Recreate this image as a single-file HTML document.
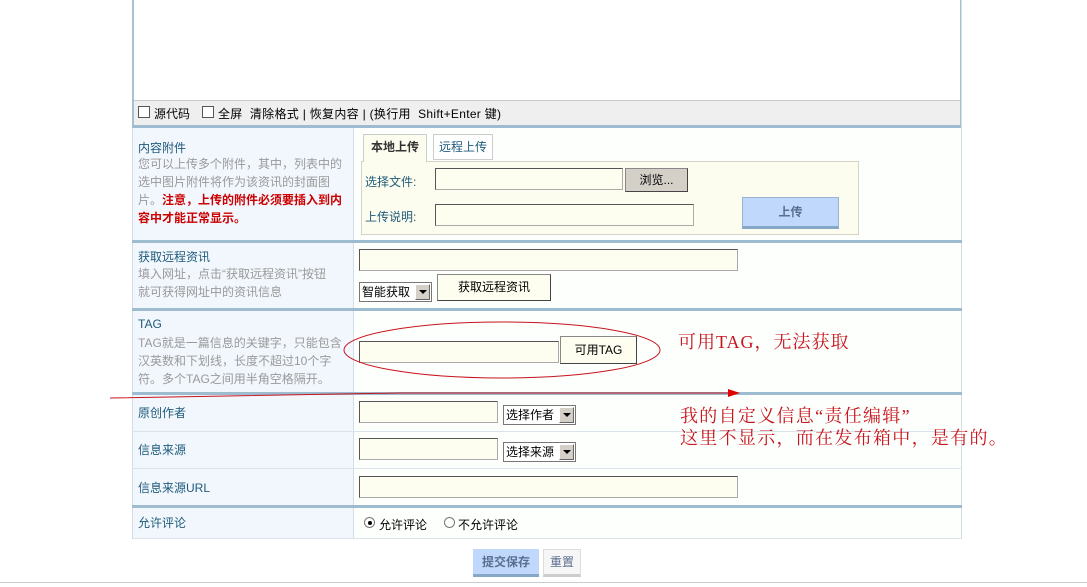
<!DOCTYPE html>
<html><head><meta charset="utf-8"><style>
*{margin:0;padding:0;box-sizing:border-box}
body{width:1087px;height:587px;background:#fff;position:relative;overflow:hidden;font-family:"Liberation Sans","Noto Sans CJK SC",sans-serif;font-size:12px}
div,span{position:absolute}
.lb{background:#f1f7fd}
.rt{background:#fcfffc}
.hl{background:#9dbcd0;height:3px;left:132px;width:830px}
.tl{background:#dbe3ea;height:1px;left:132px;width:830px}
.lab{color:#1f5a7a;font-size:12px}
.desc{color:#9a9a9a;font-size:12px;line-height:18px;width:215px}
.inp{background:#fdfdf0;border:1px solid #aaa;border-top-color:#555;border-left-color:#555;height:22px}
.btn{background:#fdfdf0;border:1px solid #888;border-right-color:#444;border-bottom-color:#444;text-align:center;font-size:12px;line-height:24px;color:#000}
.sel{border:1px solid #777;background:#fff;height:20px;font-size:12px;line-height:18px;padding-left:2px}
.sel b{position:absolute;right:1px;top:1px;width:15px;height:16px;background:#d4d0c8;border:1px solid #fff;border-right-color:#666;border-bottom-color:#666}
.sel b:after{content:"";position:absolute;left:3px;top:5px;border:4px solid transparent;border-top:4px solid #000;border-bottom:0}
.red{color:#c8141e;font-family:"Liberation Serif","Noto Serif CJK SC",serif;font-size:18px;white-space:nowrap}
</style></head><body>
<div style="left:132px;top:0;width:830px;height:126px;border:2px solid #a9bfd2;border-top:0;border-bottom:0;background:#fff"></div>
<div style="left:134px;top:100px;width:826px;height:25px;background:#efefef;border-top:1px solid #c9c9c9"></div>
<div style="left:138px;top:106px;width:12px;height:12px;border:1px solid #555;background:#fff"></div>
<div style="left:154px;top:105px;font-size:12px">源代码</div>
<div style="left:202px;top:106px;width:12px;height:12px;border:1px solid #555;background:#fff"></div>
<div style="left:218px;top:105px;font-size:12px;letter-spacing:0.3px">全屏 &nbsp;清除格式 | 恢复内容 | (换行用 &nbsp;Shift+Enter 键)</div>
<div class="hl" style="top:125px"></div>
<div class="lb" style="left:132px;top:128px;width:221px;height:410px"></div>
<div class="rt" style="left:354px;top:128px;width:607px;height:410px"></div>
<div style="left:353px;top:128px;width:1px;height:410px;background:#d3dde6"></div>
<div style="left:132px;top:128px;width:1px;height:410px;background:#d3dde6"></div>
<div style="left:961px;top:0;width:1px;height:538px;background:#d3dde6"></div>
<div class="tl" style="top:538px"></div>
<div class="hl" style="top:240px"></div>
<div class="hl" style="top:308px"></div>
<div class="hl" style="top:392px"></div>
<div class="tl" style="top:431px"></div>
<div class="tl" style="top:468px"></div>
<div class="hl" style="top:505px"></div>
<div class="lab" style="left:138px;top:139px">内容附件</div>
<div class="desc" style="left:138px;top:155px">您可以上传多个附件，其中，列表中的<br>选中图片附件将作为该资讯的封面图<br>片。<span style="position:static;color:#c00;font-weight:bold">注意，上传的附件必须要插入到内<br>容中才能正常显示。</span></div>
<div style="left:361px;top:161px;width:498px;height:74px;background:#fdfdef;border:1px solid #d4d4c4"></div>
<div style="left:363px;top:134px;width:64px;height:28px;background:#fdfdef;border:1px solid #ccc;border-bottom:0;font-weight:bold;color:#333;text-align:center;line-height:24px">本地上传</div>
<div style="left:433px;top:134px;width:60px;height:26px;background:#fff;border:1px solid #ccc;color:#1f5a7a;text-align:center;line-height:24px">远程上传</div>
<div class="lab" style="left:365px;top:173px">选择文件:</div>
<div class="inp" style="left:435px;top:168px;width:188px"></div>
<div class="btn" style="left:625px;top:168px;width:63px;height:24px;background:#d4d0c8;line-height:22px">浏览...</div>
<div class="lab" style="left:365px;top:208px">上传说明:</div>
<div class="inp" style="left:435px;top:204px;width:259px"></div>
<div style="left:742px;top:197px;width:97px;height:32px;background:#c0d8fb;border:1px solid #97b3cf;border-bottom:3px solid #85a8c6;text-align:center;line-height:28px;font-weight:bold;color:#5a6f90">上传</div>
<div class="lab" style="left:138px;top:248px">获取远程资讯</div>
<div class="desc" style="left:138px;top:265px">填入网址，点击“获取远程资讯”按钮<br>就可获得网址中的资讯信息</div>
<div class="inp" style="left:359px;top:249px;width:379px"></div>
<div class="sel" style="left:359px;top:282px;width:73px">智能获取<b></b></div>
<div class="btn" style="left:437px;top:274px;width:114px;height:27px">获取远程资讯</div>
<div class="lab" style="left:138px;top:317px">TAG</div>
<div class="desc" style="left:138px;top:334px">TAG就是一篇信息的关键字，只能包含<br>汉英数和下划线，长度不超过10个字<br>符。多个TAG之间用半角空格隔开。</div>
<div class="inp" style="left:359px;top:341px;width:200px"></div>
<div class="btn" style="left:560px;top:336px;width:77px;height:28px;line-height:26px">可用TAG</div>
<svg style="position:absolute;left:340px;top:320px" width="330" height="62"><ellipse cx="162" cy="30" rx="158" ry="28" fill="none" stroke="#c8141e" stroke-width="1"/></svg>
<div class="red" style="left:678px;top:328px;letter-spacing:1px">可用TAG，无法获取</div>
<svg style="position:absolute;left:100px;top:388px" width="650" height="14"><path d="M10 10 L300 5 L630 5" fill="none" stroke="#c8141e" stroke-width="1"/><path d="M628 1 L640 5 L628 9 Z" fill="#e00000"/></svg>
<div class="lab" style="left:138px;top:404px">原创作者</div>
<div class="inp" style="left:359px;top:401px;width:139px"></div>
<div class="sel" style="left:503px;top:405px;width:73px">选择作者<b></b></div>
<div class="lab" style="left:138px;top:441px">信息来源</div>
<div class="inp" style="left:359px;top:438px;width:139px"></div>
<div class="sel" style="left:503px;top:442px;width:73px">选择来源<b></b></div>
<div class="lab" style="left:138px;top:479px">信息来源URL</div>
<div class="inp" style="left:359px;top:476px;width:379px"></div>
<div class="red" style="left:680px;top:405px;line-height:22px;letter-spacing:1.3px">我的自定义信息“责任编辑”<br>这里不显示，而在发布箱中，是有的。</div>
<div class="lab" style="left:138px;top:514px">允许评论</div>
<div style="left:364px;top:517px;width:11px;height:11px;border-radius:50%;border:1px solid #777;background:#fff"></div>
<div style="left:368px;top:521px;width:4px;height:4px;border-radius:50%;background:#000"></div>
<div style="left:379px;top:516px">允许评论</div>
<div style="left:444px;top:517px;width:11px;height:11px;border-radius:50%;border:1px solid #777;background:#fff"></div>
<div style="left:458px;top:516px">不允许评论</div>
<div style="left:473px;top:549px;width:66px;height:28px;background:#c0d8fb;border-bottom:3px solid #85a8c6;text-align:center;line-height:26px;font-weight:bold;color:#5a6f90">提交保存</div>
<div style="left:543px;top:549px;width:38px;height:28px;background:#f6f6f6;border:1px solid #ddd;border-bottom:3px solid #ccc;text-align:center;line-height:24px;color:#5a6f90">重置</div>
<div style="left:0;top:582px;width:1087px;height:1px;background:#ccc"></div>
</body></html>
